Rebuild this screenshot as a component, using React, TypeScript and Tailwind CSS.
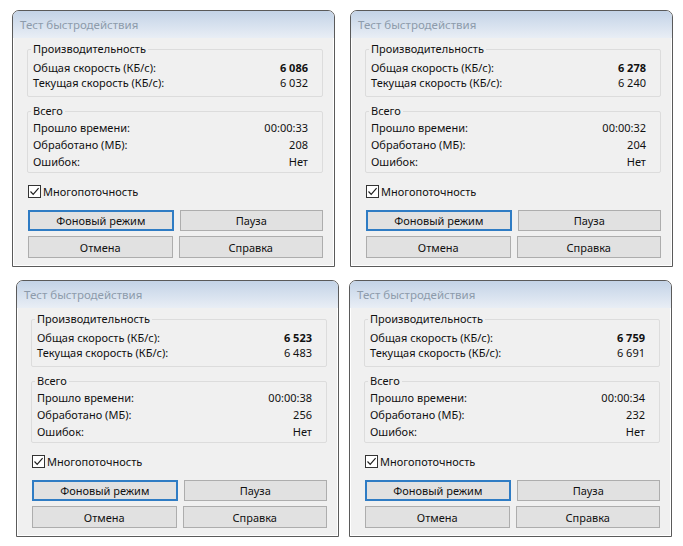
import React from 'react';

type Bench = {
  total: string;
  current: string;
  elapsed: string;
  processed: string;
  errors: string;
};

const benches: Bench[] = [
  { total: '6 086', current: '6 032', elapsed: '00:00:33', processed: '208', errors: 'Нет' },
  { total: '6 278', current: '6 240', elapsed: '00:00:32', processed: '204', errors: 'Нет' },
  { total: '6 523', current: '6 483', elapsed: '00:00:38', processed: '256', errors: 'Нет' },
  { total: '6 759', current: '6 691', elapsed: '00:00:34', processed: '232', errors: 'Нет' },
];

const Row: React.FC<{ label: string; value: string; bold?: boolean; h: string }> = ({ label, value, bold, h }) => (
  <div className={`flex items-center justify-between ${h}`}>
    <span>{label}</span>
    <span className={bold ? 'font-bold' : ''}>{value}</span>
  </div>
);

const Button: React.FC<{ label: string; focused?: boolean; h: string }> = ({ label, focused, h }) => (
  <div
    className={`flex-1 flex items-center justify-center ${h} bg-[#e1e1e1] ${
      focused ? 'border-2 border-[#2f7cc4]' : 'border border-[#adadad]'
    }`}
  >
    {label}
  </div>
);

const BenchWindow: React.FC<{ b: Bench }> = ({ b }) => (
  <div className="w-[323px] h-[257px] flex flex-col border border-[#5a5a5a] rounded-t-[7px] overflow-hidden bg-[#f0f0f0] shadow-[inset_0_0_0_1px_#ffffff]">
    {/* title bar */}
    <div className="h-[27px] shrink-0 flex items-center pl-[7px] bg-gradient-to-b from-[#c3d3e7] to-[#e9eef5] text-[#8d9bab] text-[11.5px]">
      Тест быстродействия
    </div>

    <div className="flex-1 flex flex-col pl-[14px] pr-[11px] text-[11px] leading-[15px] text-[#111]">
      <fieldset className="mt-[3px] border border-[#dcdcdc] rounded-[2px] pl-[5px] pr-[14px] pb-[6px]">
        <legend className="ml-[-2px] px-[2px] leading-[16px] h-[16px]">Производительность</legend>
        <div className="pt-[3px]">
          <Row label="Общая скорость (КБ/с):" value={b.total} bold h="h-[15px]" />
          <Row label="Текущая скорость (КБ/с):" value={b.current} h="h-[15px]" />
        </div>
      </fieldset>

      <fieldset className="mt-[6px] border border-[#dcdcdc] rounded-[2px] pl-[5px] pr-[14px] pb-[2px]">
        <legend className="ml-[-2px] px-[2px] leading-[16px] h-[16px]">Всего</legend>
        <div>
          <Row label="Прошло времени:" value={b.elapsed} h="h-[17px]" />
          <Row label="Обработано (МБ):" value={b.processed} h="h-[17px]" />
          <Row label="Ошибок:" value={b.errors} h="h-[17px]" />
        </div>
      </fieldset>

      <div className="mt-[12px] ml-[1px] flex items-center gap-[2px] h-[13px]">
        <div className="w-[13px] h-[13px] border border-[#333] bg-white flex items-center justify-center">
          <svg width="11" height="11" viewBox="0 0 11 11">
            <path d="M1.5 5.5 L4.2 8.3 L9.6 2.2" fill="none" stroke="#222" strokeWidth="1.2" />
          </svg>
        </div>
        <span>Многопоточность</span>
      </div>

      <div className="mt-[12px] ml-[1px] flex gap-[6px]">
        <Button label="Фоновый режим" focused h="h-[21px]" />
        <Button label="Пауза" h="h-[21px]" />
      </div>
      <div className="mt-[5px] ml-[1px] flex gap-[6px]">
        <Button label="Отмена" h="h-[22px]" />
        <Button label="Справка" h="h-[22px]" />
      </div>
    </div>
  </div>
);

export default function App() {
  return (
    <div
      className="w-[683px] h-[546px] bg-white overflow-hidden"
      style={{ fontFamily: '"Noto Sans", "Open Sans", sans-serif' }}
    >
      <div className="flex gap-[15px] pl-[12px] pt-[10px]">
        <BenchWindow b={benches[0]} />
        <BenchWindow b={benches[1]} />
      </div>
      <div className="flex gap-[10px] pl-[16px] mt-[13px]">
        <BenchWindow b={benches[2]} />
        <BenchWindow b={benches[3]} />
      </div>
    </div>
  );
}
